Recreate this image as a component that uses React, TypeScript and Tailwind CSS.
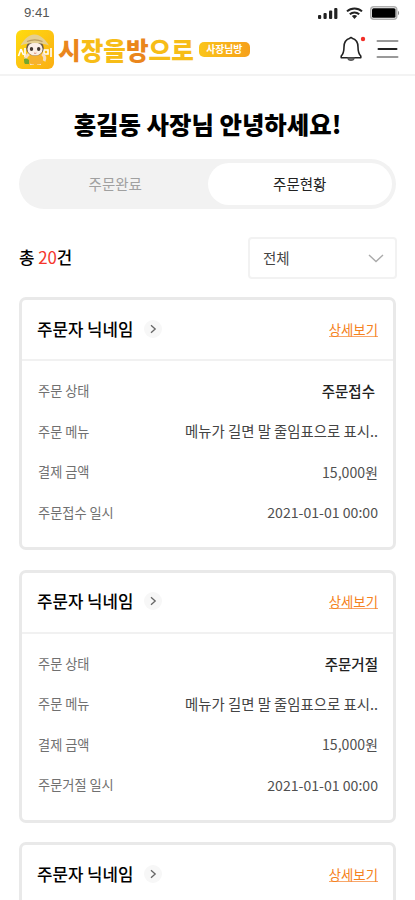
import React, { useState } from 'react';

interface Order {
  id: number;
  nickname: string;
  status?: string;
  menu?: string;
  price?: string;
  date?: string;
}

const orders: Order[] = [
  { id: 1, nickname: '주문자 닉네임', status: '주문접수', menu: '메뉴가 길면 말 줄임표으로 표시..', price: '15,000원', date: '2021-01-01 00:00' },
  { id: 2, nickname: '주문자 닉네임', status: '주문거절', menu: '메뉴가 길면 말 줄임표으로 표시..', price: '15,000원', date: '2021-01-01 00:00' },
  { id: 3, nickname: '주문자 닉네임' },
];

const StatusBar = () => (
  <div className="flex h-[25px] items-center justify-between pl-6 pr-[14px]">
    <span className="font-['Liberation_Sans',sans-serif] text-[13.2px] leading-none text-[#555]">9:41</span>
    <div className="flex items-center">
      <svg width="20" height="12" viewBox="0 0 20 12" fill="#222">
        <rect x="0" y="8" width="3.2" height="4" rx="1" />
        <rect x="5.5" y="6" width="3.2" height="6" rx="1" />
        <rect x="11" y="3.5" width="3.2" height="8.5" rx="1" />
        <rect x="16.2" y="1" width="3.2" height="11" rx="1" />
      </svg>
      <svg className="ml-2" width="17" height="12" viewBox="0 0 17 12" fill="none" stroke="#222" strokeWidth="2">
        <path d="M1 4.4C5.2.4 11.8.4 16 4.4" />
        <path d="M3.8 7.3c2.7-2.5 6.7-2.5 9.4 0" />
        <path d="M5.9 9 8.5 12l2.6-3c-1.5-1.3-3.7-1.3-5.2 0z" fill="#222" stroke="none" />
      </svg>
      <svg className="ml-[7px]" width="31" height="14" viewBox="0 0 31 14">
        <rect x=".75" y=".75" width="26" height="12.5" rx="3" fill="#fff" stroke="#b0b0b0" strokeWidth="1.5" />
        <rect x="2" y="2.2" width="23.5" height="9.6" rx="1.5" fill="#000" />
        <path d="M28 4.8c1.5.8 1.5 3.6 0 4.4z" fill="#888" />
      </svg>
    </div>
  </div>
);

const Mascot = () => (
  <svg width="38" height="39" viewBox="0 0 38 39">
    <defs>
      <linearGradient id="mascotBg" x1="0" y1="0" x2="1" y2="1">
        <stop offset="0" stopColor="#ffdc10" />
        <stop offset="1" stopColor="#fbae13" />
      </linearGradient>
    </defs>
    <rect width="38" height="39" rx="6" fill="url(#mascotBg)" />
    <path d="M5 19 2.5 26M5 19l2.5 6M9 18v9M28 20v4h4v-4zM35 18v9" fill="none" stroke="#fff" strokeWidth="1.6" />
    <path d="M14 31h4v4h-4zM21 31h4v4h-4z" fill="#f7e3cb" />
    <path d="M13 24c-3 2-4 5-3 7M26 24c3 2 3 5 2 7" fill="none" stroke="#f5ddc5" strokeWidth="3" />
    <path d="M14 24h11l2 9c-4 2-11 2-14 0z" fill="#f6b22f" />
    <ellipse cx="19" cy="18" rx="8.8" ry="7.8" fill="#6b5a45" />
    <ellipse cx="19" cy="19" rx="7.6" ry="6.6" fill="#fbeee6" />
    <ellipse cx="15.5" cy="19" rx="1.7" ry="2" fill="#453a33" />
    <ellipse cx="22.7" cy="19" rx="1.7" ry="2" fill="#453a33" />
    <path d="M18 23q1.2.8 2.4 0" fill="none" stroke="#d66a55" strokeWidth=".8" />
    <path d="M4.500 15.500C7 11 12 4.500 18.500 4.500S30 10.500 33 15.500c-7-3.500-21.500-3.500-28.500 0z" fill="#e5cf91" />
    <path d="M11 11.500c5-2 10.500-2 15.500 0" fill="none" stroke="#b99b5e" strokeWidth="1.3" />
    <path d="M8 29c2-1 4 0 5 1v4H9c-1-1-1-3-1-5z" fill="#75a62b" />
  </svg>
);

const Header = () => (
  <header className="flex h-[51px] items-center justify-between border-b-2 border-[#f3f3f3] pl-4 pr-[15px]">
    <div className="flex items-center">
      <Mascot />
      <h1 className="-mt-px ml-[4px] whitespace-nowrap text-[24.6px] leading-none font-black text-[#f7bd17]">
        <span className="text-[#ea861c]">시</span>장을<span className="text-[#ea861c]">방</span>으로
      </h1>
      <span className="ml-[5px] flex h-[15px] w-[51px] items-center justify-center rounded-[5px] bg-linear-to-r from-[#fac51b] to-[#f6a01b] text-[9.8px] leading-none font-bold text-white">
        사장님방
      </span>
    </div>
    <div className="flex items-center">
      <svg className="-mt-[2px]" width="28" height="28" viewBox="0 0 28 28" fill="none" stroke="#222" strokeWidth="1.6" strokeLinejoin="round">
        <path d="M12 3.2c-4.500 1.200-6 4.500-6 8.800 0 4-.7 7-2.800 9v1.800h19.600V21c-2.100-2-2.800-5-2.800-9 0-4.300-1.500-7.600-6-8.800a1.100 1.100 0 0 0-2 0z" />
        <path d="M10 23c.4 3 5.600 3 6 0z" fill="#888" stroke="#555" />
        <circle cx="25" cy="4" r="2.2" fill="#f22e27" stroke="none" />
      </svg>
      <svg className="-mt-px ml-[10px] mr-px" width="23" height="22" viewBox="0 0 23 22" strokeWidth="2" strokeLinecap="round">
        <path d="M1.500 3h20M1.500 19h20" stroke="#999" />
        <path d="M2.500 11h18" stroke="#222" />
      </svg>
    </div>
  </header>
);

const Row = ({ label, value, valueClass }: { label: string; value?: string; valueClass: string }) => (
  <div className="flex h-[40.5px] items-center justify-between">
    <span className="text-[13.2px] text-[#707070]">{label}</span>
    <span className={valueClass}>{value}</span>
  </div>
);

const OrderCard = ({ order }: { order: Order }) => (
  <li className="h-[253px] shrink-0 rounded-[7px] border-[3px] border-[#e9e9e9]">
    <div className="flex h-[61px] items-center justify-between border-b-2 border-[#f1f1f1] px-[15px]">
      <div className="flex items-center">
        <strong className="text-[16.8px] font-medium text-black">{order.nickname}</strong>
        <button className="-mt-[2px] ml-[11px] flex size-[18px] items-center justify-center rounded-full bg-[#f7f7f7]">
          <svg width="7" height="10" viewBox="0 0 7 10" fill="none" stroke="#666" strokeWidth="1.3">
            <path d="M1 1.200 5.200 5 1 8.800" />
          </svg>
        </button>
      </div>
      <a href="#" className="-mt-px border-b border-[#f8a76b] text-[13.4px] leading-[14px] text-[#f58220]">상세보기</a>
    </div>
    {order.status && (
      <div className="pt-[10px] pl-4 pr-[15px]">
        <Row
          label="주문 상태"
          value={order.status}
          valueClass={`text-[14.5px] font-medium text-[#222] ${order.status === '주문접수' ? 'pr-[3px]' : ''}`}
        />
        <Row label="주문 메뉴" value={order.menu} valueClass="text-[14.4px] leading-[20px] -mt-px text-[#444]" />
        <Row label="결제 금액" value={order.price} valueClass="text-[14.1px] text-[#505050]" />
        <Row label={`${order.status} 일시`} value={order.date} valueClass="text-[14.1px] text-[#505050]" />
      </div>
    )}
  </li>
);

const tabs = ['주문완료', '주문현황'];

const App: React.FC = () => {
  const [tab, setTab] = useState('주문현황');

  return (
    <div className="h-[900px] w-full overflow-hidden bg-white font-['Noto_Sans_CJK_KR',sans-serif]">
      <StatusBar />
      <Header />
      <main className="px-[19px]">
        <h2 className="pt-[29px] text-center text-[24.4px] leading-[38px] font-black whitespace-nowrap text-black">
          홍길동 사장님 안녕하세요!
        </h2>
        <div className="mt-4 flex h-[50px] rounded-full bg-[#f2f2f2] p-1">
          {tabs.map((name) => (
            <button
              key={name}
              onClick={() => setTab(name)}
              className={`flex-1 rounded-full text-[14.5px] ${tab === name ? 'bg-white text-[#222]' : 'text-[#a0a0a0]'}`}
            >
              {name}
            </button>
          ))}
        </div>
        <div className="mt-7 -mr-px flex h-[42px] items-center justify-between">
          <p className="text-[16.8px] font-medium text-black">
            총 <span className="font-normal text-[#f5362b]">20</span>건
          </p>
          <button className="flex h-[42px] w-[149px] items-center justify-between rounded-[4px] border-2 border-[#f2f2f2] pr-[11px] pl-[13px] text-[14.5px] text-[#444]">
            전체
            <svg width="16" height="9" viewBox="0 0 16 9" fill="none" stroke="#aaa" strokeWidth="1.4">
              <path d="m1 1 7 6.500L15 1" />
            </svg>
          </button>
        </div>
        <ul className="mt-[18px] flex flex-col gap-[19.5px]">
          {orders.map((order) => (
            <OrderCard key={order.id} order={order} />
          ))}
        </ul>
      </main>
    </div>
  );
};

export default App;
